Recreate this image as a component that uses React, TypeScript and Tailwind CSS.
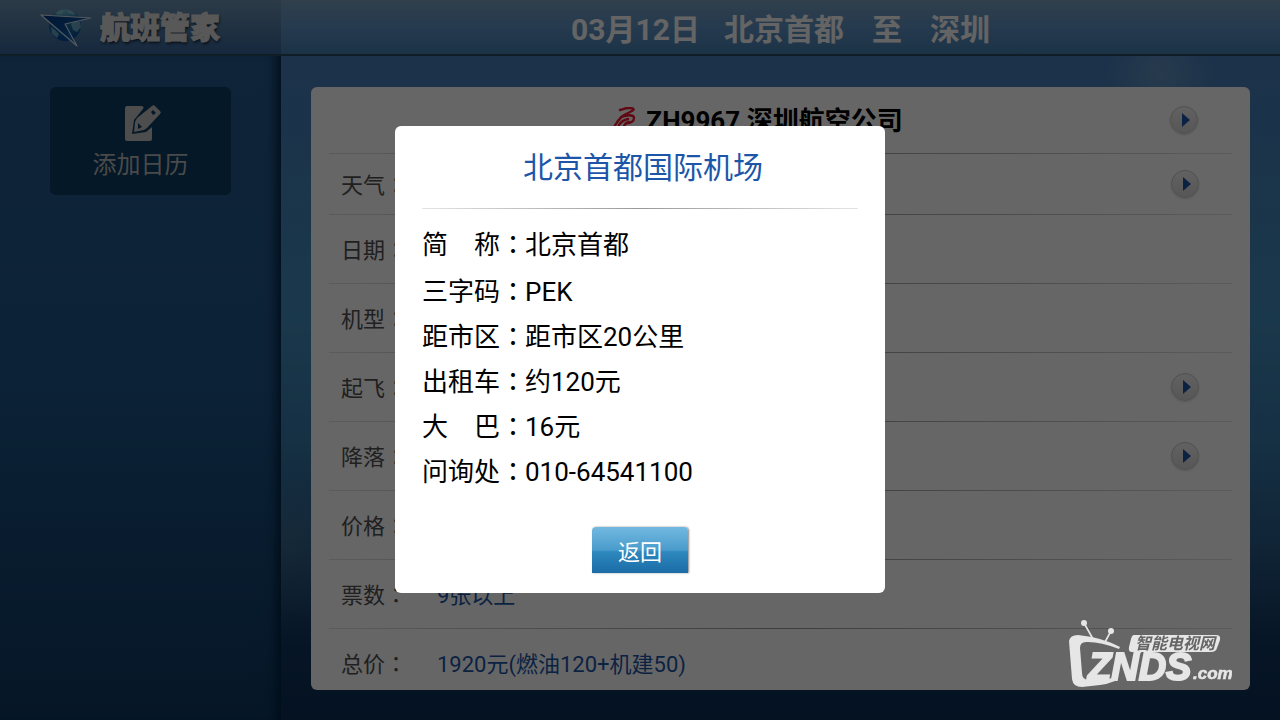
import { useState } from "react";
import { clsx } from "clsx";

const rows = [
  { label: "天气", value: "", more: true },
  { label: "日期", value: "" },
  { label: "机型", value: "" },
  { label: "起飞", value: "", more: true },
  { label: "降落", value: "", more: true },
  { label: "价格", value: "" },
  { label: "票数", value: "9张以上" },
  { label: "总价", value: "1920元(燃油120+机建50)" },
];

const airport = [
  { label: "简　称", value: "北京首都" },
  { label: "三字码", value: "PEK" },
  { label: "距市区", value: "距市区20公里" },
  { label: "出租车", value: "约120元" },
  { label: "大　巴", value: "16元" },
  { label: "问询处", value: "010-64541100" },
];

function Logo() {
  return (
    <svg className="h-10 w-13 shrink-0" viewBox="0 0 52 40" aria-hidden="true">
      <defs>
        <radialGradient id="globe" cx="0.5" cy="0" r="1">
          <stop offset="0" stopColor="#6fb8cc" />
          <stop offset="0.5" stopColor="#1a6a9c" />
          <stop offset="1" stopColor="#00489c" />
        </radialGradient>
        <linearGradient id="wing" x1="0" y1="0" x2="1" y2="1">
          <stop offset="0" stopColor="#003a80" />
          <stop offset="0.5" stopColor="#0a4c9c" />
          <stop offset="1" stopColor="#2a90e0" />
        </linearGradient>
      </defs>
      <circle cx="25" cy="18" r="16" fill="url(#globe)" />
      <path
        d="M15 6l5-3 4 1-2 3-4 1zM27 3l5 1 4 4-5-1-3-1zM35 14l5 1 1 5-4 5-4-2-2-6zM11 20l4 3 4 4-2 4-5-4z"
        fill="#a0d4e0"
        opacity="0.6"
      />
      <path d="M1 8l50 3-26 6 12 22z" fill="url(#wing)" stroke="#d0dce8" strokeWidth="1.2" strokeLinejoin="round" />
    </svg>
  );
}

function NoteIcon() {
  return (
    <svg className="ml-1 h-10 w-10" viewBox="0 0 40 40" aria-hidden="true">
      <path d="M4 3h15a2 2 0 0 1 1 3l-9 11-2 14 14-2 6-5v12a2 2 0 0 1-2 2H4a2 2 0 0 1-2-2V5a2 2 0 0 1 2-2z" fill="#c0c0c0" />
      <path
        d="M29 3a2 2 0 0 1 3 0l5 5a2 2 0 0 1 0 3L24 25l-3 2-10 2 1-10 2-4zM30 7l-2 2 2 3 3-2zM15 20v6l4-2z"
        fill="#c0c0c0"
        fillRule="evenodd"
      />
    </svg>
  );
}

function AirlineLogo() {
  return (
    <svg
      className="size-7"
      viewBox="0 0 28 28"
      fill="none"
      stroke="#f01830"
      strokeWidth="2.4"
      strokeLinecap="round"
      aria-hidden="true"
    >
      <path d="M8 3c4-1 5-2 9-2 6 0 6 2 1 4C11 8 7 11 2 20" />
      <path d="M9 10c5-2 13-3 13 1 0 3-3 5-6 5M6 20c2-5 5-7 10-8M12 20c0-3 2-4 5-5" />
    </svg>
  );
}

function MoreButton({ label }: { label: string }) {
  return (
    <button
      type="button"
      aria-label={label}
      className="flex size-7 items-center justify-center rounded-full border border-[#c8c8c8] bg-linear-to-b from-[#f4f4f4] to-[#d8d8d8] shadow-sm"
    >
      <svg className="ml-1 h-3.5 w-2" viewBox="0 0 8 14" aria-hidden="true">
        <path d="M0 0l8 7-8 7z" fill="#1d56a8" />
      </svg>
    </button>
  );
}

function Divider() {
  return <div className="h-px bg-linear-to-r from-[#e4e4e4] via-[#999] to-[#e4e4e4]" />;
}

// full-width colon set in the TC face, where it sits in the middle of its box
function Colon() {
  return <span className="font-[Roboto,'Noto_Sans_CJK_TC',sans-serif]">：</span>;
}

function Watermark() {
  return (
    <svg
      className="pointer-events-none fixed right-12 bottom-8 z-20 h-17 w-41"
      viewBox="0 0 164 68"
      fill="#e6e6e6"
      aria-label="ZNDS.com"
    >
      <circle cx="16" cy="3" r="3" />
      <circle cx="43" cy="11" r="3" />
      <path d="M16 3l9 16M43 11l-6 11" stroke="#e6e6e6" strokeWidth="1.6" />
      <path d="M1 21q1-6 9-6l14 2q17 4 28 10l-1 2q-18-7-31-7-8-1-8 6l2 25q0 7 7 7l27-2-1 3q-7 3-15 4l-18 2q-9 0-10-8z" />
      <path d="M66 15h82q5 0 4 5l-3 8q-1 4-6 4H74l-6 3 1-3h-5q-4 0-3-5l2-8q1-4 3-4z" />
      <text x="67" y="29" fontSize="16" fontWeight="700" fontStyle="italic" fill="#666" fontFamily="'Noto Sans CJK SC', sans-serif">
        智能电视网
      </text>
      <text
        x="20"
        y="60"
        fontSize="38"
        fontWeight="700"
        fontStyle="italic"
        stroke="#e6e6e6"
        strokeWidth="2"
        fontFamily="'Liberation Sans', sans-serif"
      >
        ZNDS
      </text>
      <text x="125" y="59" fontSize="17" fontWeight="700" fontStyle="italic" stroke="#e6e6e6" strokeWidth="0.6" fontFamily="'Liberation Sans', sans-serif">
        .com
      </text>
    </svg>
  );
}

export default function App() {
  const [open, setOpen] = useState(true);

  return (
    <div className="flex h-screen flex-col overflow-hidden bg-[#0a2d55] font-[Roboto,'Noto_Sans_CJK_SC',sans-serif]">
      <header className="flex h-14 shrink-0 border-b-2 border-[#28485f] bg-linear-to-b from-[#78a0be] via-[#5f92c4] to-[#4680b0]">
        <div className="flex w-[281px] shrink-0 items-center gap-2 bg-linear-to-b from-[#6c93b0] to-[#38649a] pl-10">
          <Logo />
          <h1 className="pt-0.5 text-3xl font-black text-[#dcdcdc] [-webkit-text-stroke:1px_#dcdcdc] [text-shadow:1px_2px_3px_#123]">
            航班管家
          </h1>
        </div>
        <h2 className="flex flex-1 items-center justify-center gap-6 pt-1.5 text-3xl font-bold text-[#fafafa]">
          <span>03月12日</span>
          <span className="flex gap-7">
            <span>北京首都</span>
            <span>至</span>
            <span>深圳</span>
          </span>
        </h2>
      </header>

      <div className="flex min-h-0 flex-1">
        <aside className="w-[281px] shrink-0 bg-linear-to-b from-[#265a8c] via-[#1e5588] via-50% to-[#0e3860] px-[50px] pt-[31px] shadow-[inset_-12px_0_12px_-8px_#002040]">
          <button
            type="button"
            className="flex h-27 w-full flex-col items-center gap-1.5 rounded-md bg-[#0a3c62] pt-4 text-2xl text-[#b8b8b8]"
          >
            <NoteIcon />
            添加日历
          </button>
        </aside>

        <main className="flex-1 bg-[radial-gradient(circle_at_88%_3%,#a8c0d050,transparent_5%),radial-gradient(circle_at_0%_74%,#7890a030,transparent_7%),linear-gradient(#467db9,#428cbc_40%,#3778aa_58%,#2b5f8c_72%,#12375f_88%,#0a2d55)] px-[30px] pt-[31px] pb-[30px]">
          <section className="h-full overflow-hidden rounded-md bg-white px-[18px]">
            <div className="flex h-[66px] items-center pr-[34px]">
              <div className="flex flex-1 items-center justify-center gap-1.5 pt-0.5 pl-4 text-[26px] font-bold">
                <AirlineLogo />
                ZH9967 深圳航空公司
              </div>
              <MoreButton label="航班详情" />
            </div>
            <dl>
              {rows.map((row, i) => (
                <div key={row.label}>
                  <Divider />
                  <div className={clsx("flex items-center pr-[33px] pl-3 text-[22px]", i === 0 ? "h-15" : "h-17")}>
                    <dt className="w-24 pt-0.5 text-[#505050]">
                      {row.label}
                      <Colon />
                    </dt>
                    <dd className="flex-1 pt-0.5 text-[#1d56a8]">{row.value}</dd>
                    {row.more && <MoreButton label={row.label} />}
                  </div>
                </div>
              ))}
            </dl>
          </section>
        </main>
      </div>

      {open && (
        <div className="fixed inset-0 z-10 flex items-center justify-center bg-black/60 pb-px">
          <div
            role="dialog"
            aria-modal="true"
            aria-labelledby="airport-title"
            className="w-[490px] rounded-md bg-white px-[27px] pb-5"
          >
            <h3 id="airport-title" className="flex h-[82px] items-center justify-center pt-0.5 pl-1.5 text-3xl text-[#1d56a8]">
              北京首都国际机场
            </h3>
            <Divider />
            <dl className="pt-3.5 text-[26px] leading-[45px] text-black">
              {airport.map((item) => (
                <div key={item.label} className="flex first:mb-0.5">
                  <dt className="w-[103px] whitespace-nowrap">
                    {item.label}
                    <Colon />
                  </dt>
                  <dd>{item.value}</dd>
                </div>
              ))}
            </dl>
            <button
              type="button"
              onClick={() => setOpen(false)}
              className="mx-auto mt-8 block h-[46px] w-24 rounded-t-sm bg-[linear-gradient(#72b8e0,#4a9ccc_50%,#2e88be_54%,#1a6ca6)] pt-1 text-[22px] text-white shadow-[1px_0_2px_#888]"
            >
              返回
            </button>
          </div>
        </div>
      )}
      <Watermark />
    </div>
  );
}
